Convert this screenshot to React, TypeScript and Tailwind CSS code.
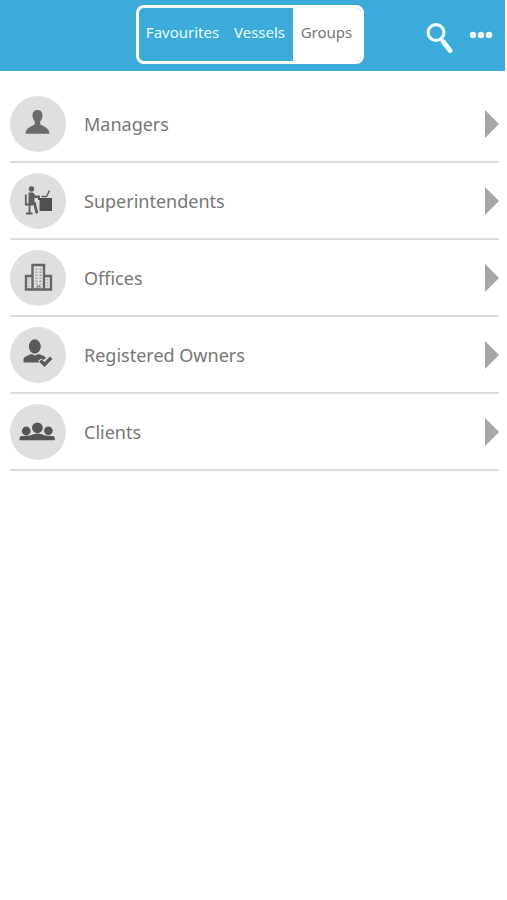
import type { ReactNode } from "react"
import { cva } from "class-variance-authority"
import { useState } from "react"

const tabButton = cva("flex items-center justify-center pb-1 text-[15px] cursor-pointer", {
  variants: {
    active: {
      true: "bg-white text-[#777777]",
      false: "text-[#e6fbff]",
    },
  },
})

function ManagerIcon() {
  return (
    <svg viewBox="0 0 56 56" className="size-14" fill="#6b6b6b" aria-hidden="true">
      <path d="M27.500 14c-3.200 0-5 2.100-5 5.300 0 2.700.9 4.700 2.300 6.200v2.600c-.5 1.900-9.300 2.800-9.300 9.700h24c0-6.900-8.800-7.800-9.300-9.700v-2.600c1.400-1.500 2.300-3.500 2.300-6.200 0-3.200-1.800-5.300-5-5.300z" />
    </svg>
  )
}

function SuperintendentIcon() {
  return (
    <svg viewBox="0 0 56 56" className="size-14" fill="none" stroke="#5e5e5e" aria-hidden="true">
      <circle cx="21.500" cy="16" r="2.700" fill="#5e5e5e" stroke="none" />
      <path d="M18.500 19.500h4.500l2.500 3h4.500v2.500h-5.500v6h-6z" fill="#5e5e5e" stroke="none" />
      <path d="M15.800 21.500v10h7M19.500 32v8M16 40.500h6.500" strokeWidth="1.800" />
      <path d="M19.500 30.500h5l2.500 9.800" strokeWidth="2.800" />
      <path d="M28 25h14v13H29.500v-11H28z" fill="#505050" stroke="none" />
      <path d="M31.500 23.500h5l3-6" strokeWidth="1.400" />
    </svg>
  )
}

function OfficeIcon() {
  return (
    <svg viewBox="0 0 56 56" className="size-14" fill="none" stroke="#666666" aria-hidden="true">
      <path d="M22.500 26h-6.500v13.500h25v-13.500H34M22.500 39.500v-24.500H34v24.500" strokeWidth="2.400" />
      <path d="M26.500 18.500v16M30.500 18.500v16" strokeWidth="2" strokeDasharray="1.500 1.500" opacity="0.5" />
      <path d="M19.200 29v8M37.500 29v8" strokeWidth="1.500" strokeDasharray="1.500 1.500" opacity="0.4" />
      <path d="M27 39v-3h3v3" strokeWidth="1" />
    </svg>
  )
}

function OwnerIcon() {
  return (
    <svg viewBox="0 0 56 56" className="size-14" fill="#5a5a5a" aria-hidden="true">
      <ellipse cx="24.800" cy="19.500" rx="6" ry="7.200" />
      <path d="M13.500 35.500v-3c0-2.500 4-4 8-5.500l3.500 1.500 3.500-1.500c3.500 1 6.500 2 7.500 4l-2.500 2-2.500-1.500-3 2.500 1.500 1.500z" />
      <path d="M30.300 33.500l4.200 4 6.700-6.700" fill="none" stroke="#5a5a5a" strokeWidth="3.400" />
    </svg>
  )
}

function ClientsIcon() {
  return (
    <svg viewBox="0 0 56 56" className="size-14" fill="#555555" aria-hidden="true">
      <circle cx="16.200" cy="27" r="4.400" />
      <circle cx="27.400" cy="23.800" r="5.400" />
      <circle cx="38.400" cy="26.800" r="4.300" />
      <path d="M9.500 36.300v-2c0-1.500 1.200-2 2.600-2.200l8.200-.7c2-1 4.500-1.600 7.300-1.600s5.300.6 7.300 1.600l7.200.7c1.500.2 2.700.7 2.700 2.200v2z" />
    </svg>
  )
}

const tabs = [
  { id: "favourites", label: "Favourites", width: "w-[88px]" },
  { id: "vessels", label: "Vessels", width: "w-[66px]" },
  { id: "groups", label: "Groups", width: "w-[68px]" },
]

const groups: { label: string; icon: ReactNode }[] = [
  { label: "Managers", icon: <ManagerIcon /> },
  { label: "Superintendents", icon: <SuperintendentIcon /> },
  { label: "Offices", icon: <OfficeIcon /> },
  { label: "Registered Owners", icon: <OwnerIcon /> },
  { label: "Clients", icon: <ClientsIcon /> },
]

export default function App() {
  const [activeTab, setActiveTab] = useState("groups")

  return (
    <div className="min-h-screen bg-white font-['Noto_Sans','Open_Sans',sans-serif]">
      <header className="mr-0.5 grid h-[71px] grid-cols-[1fr_auto_1fr] bg-[#3cabd9] pt-[5px] pr-3">
        <nav className="col-start-2 ml-1.5 flex h-[59px] overflow-hidden rounded-lg border-3 border-white">
          {tabs.map((tab) => (
            <button
              key={tab.id}
              type="button"
              className={tabButton({ active: activeTab === tab.id, className: tab.width })}
              onClick={() => setActiveTab(tab.id)}
            >
              {tab.label}
            </button>
          ))}
        </nav>
        <div className="flex h-[59px] items-center justify-end gap-4">
          <button type="button" aria-label="Search" className="cursor-pointer pt-1.5">
            <svg viewBox="0 0 28 32" className="h-8 w-7" fill="none" stroke="#f2fcff">
              <circle cx="11" cy="10.500" r="7.900" strokeWidth="3.200" />
              <path d="M16 17l2.500 3" strokeWidth="3.400" />
              <path d="M18.500 20l6.500 8.500" strokeWidth="4.800" strokeLinecap="round" />
            </svg>
          </button>
          <button type="button" aria-label="More options" className="cursor-pointer">
            <svg viewBox="0 0 24 8" className="h-2 w-6" fill="#f2fcff">
              <circle cx="4" cy="4" r="3.200" />
              <circle cx="12" cy="4" r="3.200" />
              <circle cx="20" cy="4" r="3.200" />
            </svg>
          </button>
        </div>
      </header>

      <main className="pt-[15px] pr-2 pl-2.5">
        <ul>
          {groups.map((group) => (
            <li key={group.label} className="border-b-2 border-[#dcdcdc]">
              <button type="button" className="flex w-full cursor-pointer items-center pt-2.5 pb-[9px] text-left">
                <span className="rounded-full bg-[#dfdfdf]">{group.icon}</span>
                <span className="ml-[18px] flex-1 text-lg text-[#777777]">{group.label}</span>
                <svg viewBox="0 0 14 28" className="h-7 w-3.5" fill="#a6a6a6" aria-hidden="true">
                  <path d="M0 0l14 14L0 28z" />
                </svg>
              </button>
            </li>
          ))}
        </ul>
      </main>
    </div>
  )
}
